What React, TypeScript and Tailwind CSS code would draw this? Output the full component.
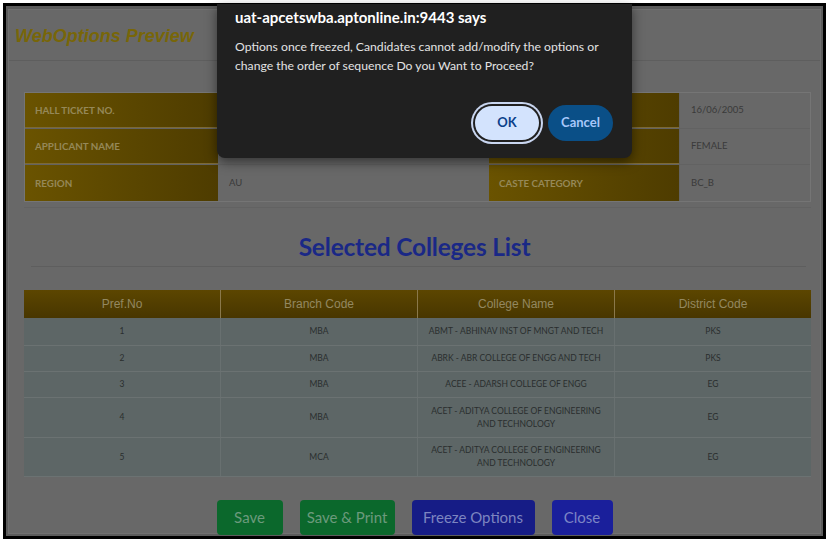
import React from "react";

const info = [
  ["HALL TICKET NO.", "", "", "16/06/2005"],
  ["APPLICANT NAME", "", "", "FEMALE"],
  ["REGION", "AU", "CASTE CATEGORY", "BC_B"],
];

const rows = [
  ["1", "MBA", ["ABMT - ABHINAV INST OF MNGT AND TECH"], "PKS", "h-[28px]"],
  ["2", "MBA", ["ABRK - ABR COLLEGE OF ENGG AND TECH"], "PKS", "h-[26px]"],
  ["3", "MBA", ["ACEE - ADARSH COLLEGE OF ENGG"], "EG", "h-[26px]"],
  ["4", "MBA", ["ACET - ADITYA COLLEGE OF ENGINEERING", "AND TECHNOLOGY"], "EG", "h-[40px]"],
  ["5", "MCA", ["ACET - ADITYA COLLEGE OF ENGINEERING", "AND TECHNOLOGY"], "EG", "h-[39px]"],
] as const;

export default function App() {
  return (
    <div className="relative w-[829px] h-[542px] bg-white overflow-hidden" style={{ fontFamily: "Lato, 'Open Sans', sans-serif" }}>
      <div className="absolute left-[3px] top-[3px] w-[823px] h-[536px] border-[3px] border-black bg-[#5c5c5c] p-[2px] pt-[3px] overflow-hidden">
        <div className="h-full bg-[#686868] border border-[#707070] flex flex-col">
          {/* header */}
          <div className="shrink-0 h-[51px] border-b border-[#5e5e5e] flex items-center pl-[6px] pt-[2px]">
            <span className="text-[18px] font-bold italic text-[#786608]" style={{ fontFamily: "'Liberation Sans', Arial, sans-serif" }}>
              WebOptions Preview
            </span>
          </div>
          {/* info table */}
          <div className="shrink-0 ml-[15px] mt-[31px] w-[787px] border border-[#757575] flex flex-col">
            {info.map((r, i) => (
              <div key={i} className={`flex h-[36px] ${i < 2 ? "border-b border-[#626262]" : ""}`}>
                <div className={`w-[193px] bg-gradient-to-r from-[#6a5300] to-[#4e3c00] flex items-center pl-[10px] text-[9.8px] font-bold text-[#958858] ${i < 2 ? "border-b border-[#7d6a35]" : ""}`}>
                  {r[0]}
                </div>
                <div className="w-[271px] flex items-center pl-[11px] text-[9.5px] text-[#3a3a3a]">{r[1]}</div>
                <div className={`w-[190px] bg-gradient-to-r from-[#6a5300] to-[#4e3c00] flex items-center pl-[10px] text-[9.8px] font-bold text-[#958858] ${i < 2 ? "border-b border-[#7d6a35]" : ""}`}>
                  {r[2]}
                </div>
                <div className="flex-1 flex items-center pl-[11px] text-[9.5px] text-[#3a3a3a] border-l border-[#626262]">{r[3]}</div>
              </div>
            ))}
          </div>
          <div className="shrink-0 ml-[15px] mt-[5px] w-[787px] h-px bg-[#626262]" />
          {/* title */}
          <div className="shrink-0 h-[58px] flex items-end justify-center">
            <span className="text-[24.5px] font-bold text-[#1a2886] leading-none pb-[7px] tracking-[-0.2px]">Selected Colleges List</span>
          </div>
          <div className="shrink-0 ml-[22px] w-[775px] h-px bg-[#5e5e5e]" />
          {/* colleges table */}
          <div className="shrink-0 ml-[15px] mt-[23px] w-[787px] flex flex-col">
            <div className="flex h-[28px] bg-gradient-to-b from-[#5c4600] to-[#483600] text-[12px] text-[#938860]" style={{ fontFamily: "'Liberation Sans', Arial, sans-serif" }}>
              {["Pref.No", "Branch Code", "College Name", "District Code"].map((h, i) => (
                <div key={h} className={`flex-1 flex items-center justify-center ${i > 0 ? "border-l border-[#8a784a]" : ""}`}>{h}</div>
              ))}
            </div>
            {rows.map((r, i) => (
              <div key={i} className={`flex ${r[4]} bg-[#5d6666] border-b border-[#6b7272] text-[8.5px] text-[#2a2e2e]`}>
                <div className="flex-1 flex items-center justify-center">{r[0]}</div>
                <div className="flex-1 flex items-center justify-center border-l border-[#687070]">{r[1]}</div>
                <div className="flex-1 flex flex-col items-center justify-center border-l border-[#687070] leading-[13px]">
                  {r[2].map((l) => (
                    <span key={l}>{l}</span>
                  ))}
                </div>
                <div className="flex-1 flex items-center justify-center border-l border-[#687070]">{r[3]}</div>
              </div>
            ))}
          </div>
          {/* buttons */}
          <div className="shrink-0 mt-[23px] flex justify-center gap-[17px] text-[15px]">
            <button className="w-[66px] h-[35px] rounded-[4px] bg-[#0b682c] text-[#6c9a7c]">Save</button>
            <button className="w-[95px] h-[35px] rounded-[4px] bg-[#0b682c] text-[#6c9a7c]">Save &amp; Print</button>
            <button className="w-[123px] h-[35px] rounded-[4px] bg-[#161c86] text-[#7d85c0]">Freeze Options</button>
            <button className="w-[61px] h-[35px] rounded-[4px] bg-[#1a1f9b] text-[#7d85c6]">Close</button>
          </div>
        </div>
      </div>

      {/* dialog */}
      <div className="absolute left-[217px] top-[4px] w-[415px] h-[154px] bg-[#202020] rounded-b-[8px] shadow-[0_4px_12px_rgba(0,0,0,0.5)] px-[18px] pt-[3px]">
        <div className="text-[15px] font-bold text-white leading-[20px]">uat-apcetswba.aptonline.in:9443 says</div>
        <div className="mt-[10px] text-[12.2px] text-[#e3e3e3] leading-[19px]">
          Options once freezed, Candidates cannot add/modify the options or change the order of sequence Do you Want to Proceed?
        </div>
        <div className="absolute right-[19px] top-[101px] flex items-center gap-[9px]">
          <button className="w-[64px] h-[34px] rounded-full bg-[#d3e3fd] text-[#0b3f8a] text-[13px] font-bold ring-2 ring-[#c9d6f0] ring-offset-2 ring-offset-[#202020]">OK</button>
          <button className="w-[65px] h-[36px] rounded-full bg-[#0a4f87] text-[#a8c7fa] text-[13px] font-bold">Cancel</button>
        </div>
      </div>
    </div>
  );
}
